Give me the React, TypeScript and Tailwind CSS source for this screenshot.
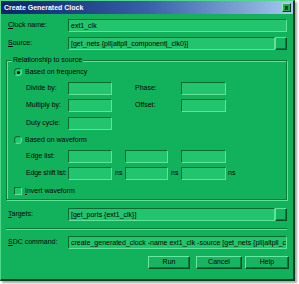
import React from "react";

const font = { fontFamily: '"Liberation Sans", Arial, sans-serif' };

const Field = ({ w, text }: { w: string; text?: string }) => (
  <div
    className={`${w} h-[13px] shrink-0 overflow-hidden whitespace-nowrap bg-[#22c56d] border-t border-l border-t-[#0a6a34] border-l-[#0a6a34] border-b border-r border-b-[#5ee39a] border-r-[#5ee39a] pl-[2px] text-[7px] leading-[12px] text-black`}>
    {text}
  </div>
);

const Dots = () => (
  <div className="w-[12px] h-[13px] shrink-0 bg-[#17b561] border-t border-l border-t-[#5ee39a] border-l-[#5ee39a] border-b border-r border-b-[#064d25] border-r-[#064d25] shadow-[inset_-1px_-1px_0_#0b7a3c]" />
);

const Btn = ({ w, label }: { w: string; label: string }) => (
  <div
    className={`${w} h-[13px] flex items-center justify-center bg-[#17b561] border-t border-l border-t-[#6ae8a3] border-l-[#6ae8a3] border-b border-r border-b-[#064d25] border-r-[#064d25] shadow-[inset_-1px_-1px_0_#0b7a3c] text-[7px] text-black`}>
    {label}
  </div>
);

const Radio = ({ on }: { on?: boolean }) => (
  <div className="w-[8px] h-[8px] rounded-full bg-[#22c56d] border border-t-[#0a6a34] border-l-[#0a6a34] border-b-[#5ee39a] border-r-[#5ee39a] flex items-center justify-center">
    {on && <div className="w-[3px] h-[3px] rounded-full bg-black" />}
  </div>
);

export default function App() {
  return (
    <div className="w-[299px] h-[284px] bg-white" style={font}>
      <div className="w-[295px] h-[281px] bg-[#12b25c] border-t border-l border-t-[#4fd88c] border-l-[#4fd88c] border-b-2 border-r-2 border-b-[#06401f] border-r-[#06401f] shadow-[2px_2px_2px_rgba(0,0,0,0.35)] text-black text-[7px] flex flex-col">
        {/* title bar */}
        <div className="h-[13px] bg-gradient-to-r from-[#0a246a] via-[#3a5fa8] to-[#a8c8ee] flex items-center justify-between pl-[3px] pr-[2px]">
          <span className="text-white font-bold text-[7px] leading-none">Create Generated Clock</span>
          <div className="w-[9px] h-[9px] bg-[#2aa857] border border-t-[#8ef0b8] border-l-[#8ef0b8] border-b-[#063a1c] border-r-[#063a1c] flex items-center justify-center text-[7px] font-bold leading-none text-black">
            x
          </div>
        </div>

        <div className="flex flex-col pl-[7px]">
          <div className="flex items-center mt-[5px]">
            <span className="w-[60px]"><u>C</u>lock name:</span>
            <Field w="w-[219px]" text="ext1_clk" />
          </div>
          <div className="flex items-center mt-[5px]">
            <span className="w-[60px]"><u>S</u>ource:</span>
            <Field w="w-[207px]" text="[get_nets {pll|altpll_component|_clk0}]" />
            <Dots />
          </div>

          {/* group box */}
          <div className="relative ml-[-2px] mt-[10px] w-[281px] h-[140px] border border-[#0a7a3b] shadow-[inset_1px_1px_0_#5ee39a,1px_1px_0_#5ee39a] flex flex-col">
            <span className="absolute left-[5px] top-[-6px] bg-[#12b25c] px-[1px] leading-[10px]">Relationship to source</span>
            <div className="flex items-center h-[10px] mt-[6px] pl-[7px] gap-[3px]">
              <Radio on />
              <span>Based on frequency</span>
            </div>
            <div className="flex items-center mt-[5px] pl-[19px]">
              <span className="w-[42px]">Divide by:</span>
              <Field w="w-[44px]" />
              <span className="w-[46px] ml-[23px]">Phase:</span>
              <Field w="w-[45px]" />
            </div>
            <div className="flex items-center mt-[4px] pl-[19px]">
              <span className="w-[42px]">Multiply by:</span>
              <Field w="w-[44px]" />
              <span className="w-[46px] ml-[23px]">Offset:</span>
              <Field w="w-[45px]" />
            </div>
            <div className="flex items-center mt-[5px] pl-[19px]">
              <span className="w-[42px]">Duty cycle:</span>
              <Field w="w-[44px]" />
            </div>
            <div className="flex items-center h-[10px] mt-[5px] pl-[7px] gap-[3px]">
              <Radio />
              <span>Based on waveform</span>
            </div>
            <div className="flex items-center mt-[5px] pl-[19px]">
              <span className="w-[42px]">Edge list:</span>
              <Field w="w-[44px]" />
              <span className="w-[13px]" />
              <Field w="w-[43px]" />
              <span className="w-[13px]" />
              <Field w="w-[45px]" />
            </div>
            <div className="flex items-center mt-[4px] pl-[19px]">
              <span className="w-[42px] whitespace-nowrap tracking-[-0.2px]">Edge shift list:</span>
              <Field w="w-[44px]" />
              <span className="w-[13px] pl-[3px]">ns</span>
              <Field w="w-[43px]" />
              <span className="w-[13px] pl-[3px]">ns</span>
              <Field w="w-[45px]" />
              <span className="pl-[2px]">ns</span>
            </div>
            <div className="flex items-center h-[10px] mt-[6px] pl-[7px] gap-[3px]">
              <div className="w-[8px] h-[8px] bg-[#22c56d] border border-t-[#0a6a34] border-l-[#0a6a34] border-b-[#5ee39a] border-r-[#5ee39a]" />
              <span><u>I</u>nvert waveform</span>
            </div>
          </div>

          <div className="flex items-center mt-[8px]">
            <span className="w-[60px]"><u>T</u>argets:</span>
            <Field w="w-[207px]" text="[get_ports {ext1_clk}]" />
            <Dots />
          </div>
          <div className="ml-[-2px] mt-[7px] w-[281px] h-[2px] border-t border-t-[#0a7a3b] border-b border-b-[#5ee39a]" />
          <div className="flex items-center mt-[6px]">
            <span className="w-[60px]"><u>S</u>DC command:</span>
            <Field w="w-[219px]" text="create_generated_clock -name ext1_clk -source [get_nets {pll|altpll_component|_clk0}]" />
          </div>
          <div className="flex items-center mt-[7px] pl-[140px]">
            <Btn w="w-[42px]" label="Run" />
            <div className="w-[6px]" />
            <Btn w="w-[46px]" label="Cancel" />
            <div className="w-[3px]" />
            <Btn w="w-[44px]" label="Help" />
          </div>
        </div>
      </div>
    </div>
  );
}
